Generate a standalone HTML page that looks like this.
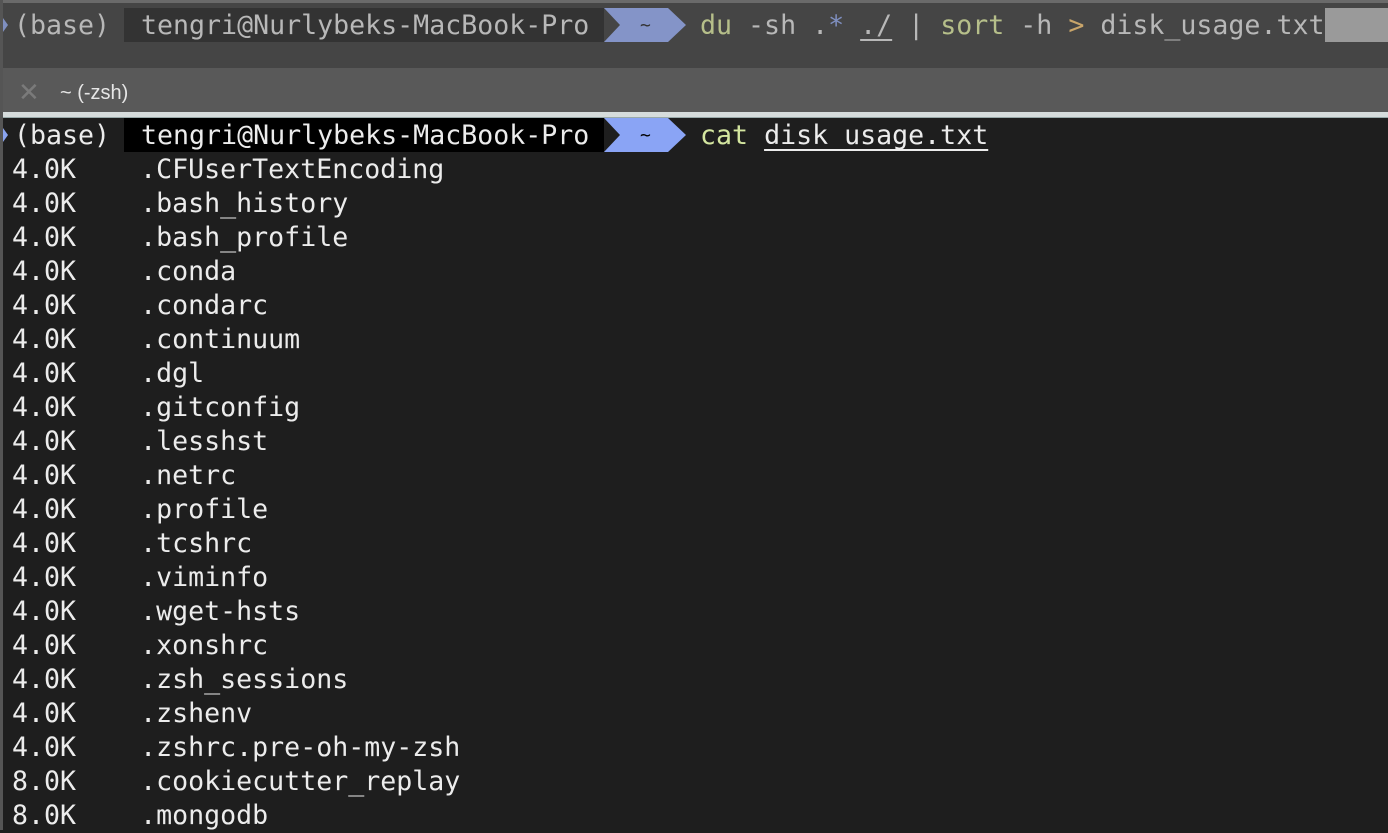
<!DOCTYPE html>
<html><head><style>
body{margin:0;width:1388px;height:830px;overflow:hidden;background:#1e1e1e;font-family:"DejaVu Sans Mono","Liberation Mono",monospace;font-size:26.6px;}
.t{position:absolute;white-space:pre;line-height:34px;height:34px}
#top{position:absolute;left:0;top:0;width:1388px;height:68px;background:#454545;border-top:3px solid #6a6a6a;box-sizing:border-box}
#tab{position:absolute;left:0;top:68px;width:1388px;height:44px;background:#595959}
#sep{position:absolute;left:0;top:112px;width:1388px;height:5px;background:#d6dcdc;border-bottom:1px solid #9aa}
#bot{position:absolute;left:0;top:118px;width:1388px;height:712px;background:#1e1e1e}
u{text-decoration:underline;text-underline-offset:5px;text-decoration-thickness:2px;text-decoration-skip-ink:none}
</style></head><body>
<div id="top"></div>
<div id="tab"></div>
<div id="sep"></div>
<div id="bot"></div>
<div style="position:absolute;left:0;top:0;width:3px;height:830px;background:#555"></div>

<!-- top pane prompt -->
<svg style="position:absolute;left:0;top:8px" width="700" height="34">
<polygon points="3,10 8,17 3,24" fill="#7f8fc0"/>
<rect x="124" y="0" width="480" height="34" fill="#333"/>
<polygon points="604,0 668,0 686,17 668,34 604,34 620,17" fill="#8494c8"/>
</svg>
<div class="t" style="left:14px;top:9px;color:#b8b8b8">(base)</div>
<div class="t" style="left:141px;top:9px;color:#b8b8b8">tengri@Nurlybeks-MacBook-Pro</div>
<div class="t" style="left:640px;top:9px;color:#333;font-size:18px">~</div>
<div class="t" style="left:700px;top:9px;color:#b8b8b8"><span style="color:#b6bf8a">du</span> -sh .<span style="color:#7f8fc0">*</span> <u>./</u> | <span style="color:#b6bf8a">sort</span> -h <span style="color:#c9a56a">&gt;</span> disk_usage.txt</div>
<div style="position:absolute;left:1325px;top:8px;width:63px;height:34px;background:#9a9a9a"></div>

<!-- tab -->
<div style="position:absolute;left:18px;top:79px;font-family:'Liberation Sans',sans-serif;font-size:26px;color:#7a7a7a;line-height:26px">✕</div>
<div style="position:absolute;left:60px;top:81px;font-family:'Liberation Sans',sans-serif;font-size:20px;color:#e6e6e6;line-height:24px">~ (-zsh)</div>

<!-- active prompt -->
<svg style="position:absolute;left:0;top:118px" width="700" height="34">
<polygon points="3,10 8,17 3,24" fill="#8aa4f0"/>
<rect x="124" y="0" width="480" height="34" fill="#000"/>
<polygon points="604,0 668,0 686,17 668,34 604,34 620,17" fill="#8aa4f5"/>
</svg>
<div class="t" style="left:14px;top:119px;color:#ececec">(base)</div>
<div class="t" style="left:141px;top:119px;color:#ececec">tengri@Nurlybeks-MacBook-Pro</div>
<div class="t" style="left:640px;top:119px;color:#000;font-size:18px">~</div>
<div class="t" style="left:700px;top:119px;color:#ececec"><span style="color:#d4e6a0">cat</span> <u>disk_usage.txt</u></div>

<div class="t" style="left:12px;top:153px;color:#ececec;height:auto">4.0K    .CFUserTextEncoding
4.0K    .bash_history
4.0K    .bash_profile
4.0K    .conda
4.0K    .condarc
4.0K    .continuum
4.0K    .dgl
4.0K    .gitconfig
4.0K    .lesshst
4.0K    .netrc
4.0K    .profile
4.0K    .tcshrc
4.0K    .viminfo
4.0K    .wget-hsts
4.0K    .xonshrc
4.0K    .zsh_sessions
4.0K    .zshenv
4.0K    .zshrc.pre-oh-my-zsh
8.0K    .cookiecutter_replay
8.0K    .mongodb</div>
</body></html>
